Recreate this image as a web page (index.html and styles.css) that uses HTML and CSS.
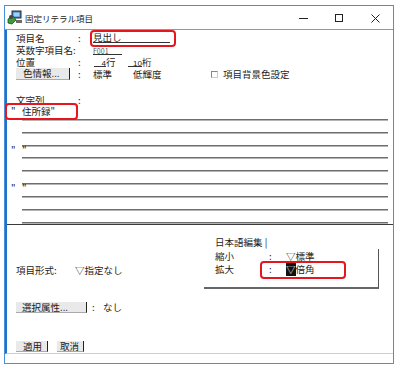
FILE: index.html
```html
<!DOCTYPE html>
<html lang="ja">
<head>
    <meta charset="UTF-8">
    <title>固定リテラル項目</title>
    <link rel="stylesheet" href="styles.css">
</head>
<body>
    <div class="window">
        <div class="titlebar">
            <svg class="app-icon" width="16" height="15" viewBox="0 0 16 15">
                <rect x="5" y="1" width="9" height="7" fill="#3d7fc4" stroke="#2b2b2b" stroke-width="1"/>
                <rect x="6.5" y="2.5" width="6" height="4" fill="#9fd0f5"/>
                <path d="M1 9 L6 6 L9 10 L5 14 L1 13 Z" fill="#3c9b3a" stroke="#1f4f1e" stroke-width="0.8"/>
                <circle cx="4" cy="7" r="2" fill="#444"/>
                <rect x="9" y="10" width="6" height="3" fill="#6b6b6b"/>
            </svg>
            <span class="title">固定リテラル項目</span>
            <div class="controls">
                <span class="ctl"><span class="ico-min"></span></span>
                <span class="ctl"><span class="ico-max"></span></span>
                <span class="ctl">
                    <svg width="9" height="9" viewBox="0 0 9 9"><path d="M0.5 0.5 L8.5 8.5 M8.5 0.5 L0.5 8.5" stroke="#222" stroke-width="1"/></svg>
                </span>
            </div>
        </div>

        <div class="client">
            <div class="head">
                <div class="row">
                    <span class="label">項目名</span><span class="colon">:</span>
                    <span class="field f-name">見出し</span>
                </div>
                <div class="row">
                    <span class="label">英数字項目名:</span><span class="colon"></span>
                    <span class="field f-id">F001</span>
                </div>
                <div class="row">
                    <span class="label">位置</span><span class="colon">:</span>
                    <span class="field f-num f-row">4</span><span class="unit">行</span>
                    <span class="field f-num f-col">10</span><span class="unit">桁</span>
                </div>
                <div class="row">
                    <span class="btn btn-color">色情報...</span><span class="colon">:</span>
                    <span class="val-std">標準</span>
                    <span class="val-low">低輝度</span>
                    <span class="check"></span>
                    <span>項目背景色設定</span>
                </div>
            </div>

            <div class="literal">
                <div class="row">
                    <span class="label">文字列</span><span class="colon">:</span>
                </div>
                <div class="lines">
                    <div class="line"><span class="q">"</span><span class="rule">住所録"</span></div>
                    <div class="line"><span class="q"></span><span class="rule"></span></div>
                    <div class="line"><span class="q"></span><span class="rule"></span></div>
                    <div class="line short"><span class="q">"</span><span class="rule">"</span></div>
                    <div class="line"><span class="q"></span><span class="rule"></span></div>
                    <div class="line"><span class="q"></span><span class="rule"></span></div>
                    <div class="line"><span class="q">"</span><span class="rule">"</span></div>
                    <div class="line"><span class="q"></span><span class="rule"></span></div>
                    <div class="line"><span class="q"></span><span class="rule"></span></div>
                </div>
            </div>

            <div class="edit">
                <div class="format">
                    <span class="fmt-label">項目形式:</span>
                    <span>▽指定なし</span>
                </div>
                <div class="jp">
                    <div class="jp-title">日本語編集 |</div>
                    <div class="jp-frame">
                        <div class="jp-row"><span>縮小</span><span>:</span><span>▽標準</span></div>
                        <div class="jp-row"><span>拡大</span><span>:</span><span><span class="inv">▽</span>倍角</span></div>
                    </div>
                </div>
            </div>

            <div class="row attr">
                <span class="btn btn-attr">選択属性...</span>
                <span class="attr-colon">:</span>
                <span>なし</span>
            </div>

            <div class="row actions">
                <span class="btn btn-ok">適用</span>
                <span class="btn btn-cancel">取消</span>
            </div>
        </div>
        <div class="footer"></div>
    </div>

    <div class="mark mark-name"></div>
    <div class="mark mark-text"></div>
    <div class="mark mark-wide"></div>
</body>
</html>
```

FILE: styles.css
```css
* { box-sizing: border-box; }
body { margin: 0; background: #fff; font-family: "Noto Sans CJK JP", "Noto Sans", sans-serif; font-size: 9.5px; color: #1c1c1c; }

/* ウィンドウ枠 */
.window { margin: 5px 0 0 4px; width: 390px; height: 359px; border: 1px solid #4a90d9; display: flex; flex-direction: column; }
.titlebar { height: 24px; flex: none; display: flex; align-items: center; border-bottom: 1px solid #a0958e; }
.app-icon { margin-left: 2px; }
.title { margin-left: 2px; font-size: 8.5px; color: #222; }
.controls { margin-left: auto; display: flex; height: 100%; }
.ctl { width: 36px; display: flex; align-items: center; justify-content: center; padding-top: 1px; }
.ico-min { width: 9px; height: 1px; background: #222; }
.ico-max { width: 8px; height: 8px; border: 1px solid #222; }

.client { height: 324px; flex: none; border-left: 2px solid #1f74c9; border-bottom: 1px solid #cfcfcf; padding-top: 2px; display: flex; flex-direction: column; }
.footer { flex: 1; }

/* 上部の項目 */
.row { display: flex; height: 12px; line-height: 12px; padding-left: 9px; white-space: nowrap; }
.label { width: 62px; }
.colon { width: 15px; }
.field { border-bottom: 1px solid #333; line-height: 10px; height: 11px; }
.f-name { width: 77px; }
.f-id { width: 29px; font-size: 7px; line-height: 14px; color: #555; }
.f-num { font-family: "Liberation Sans", sans-serif; font-size: 8px; line-height: 15px; text-align: right; }
.f-row { width: 12px; margin-left: 1px; }
.f-col { width: 14px; margin-left: 12px; }
.unit { width: 10px; }
.btn { background: #e9e9e9; border-right: 1px solid #222; border-bottom: 1px solid #aaa; line-height: 11px; }
.btn-color { width: 54px; padding-left: 7px; margin-right: 8px; }
.val-std { width: 40px; }
.val-low { width: 78px; }
.check { width: 7px; height: 7px; margin: 3px 5px 0 0; border: 1px solid #888; border-right-color: #ccc; border-bottom-color: #ccc; }

/* 文字列 */
.literal { border-bottom: 1px solid #3a3a3a; }
.literal .row { margin-top: 15px; height: 11px; line-height: 11px; }
.lines { margin-top: 1px; padding-bottom: 1px; }
.line { display: grid; grid-template-columns: 15px 1fr; height: 13px; margin-right: 5px; line-height: 9px; }
.line.short { height: 12px; }
.q { padding-left: 4px; }
.rule { border-bottom: 1px solid #6e6e6e; box-shadow: 0 1px 0 #b4b4b4; }

/* 下部 */
.edit { display: grid; grid-template-columns: 197px 175px; }
.format { padding: 40px 0 0 9px; line-height: 11px; display: flex; }
.fmt-label { width: 59px; }
.jp { padding-top: 12px; line-height: 11px; }
.jp-title { padding-left: 11px; height: 12px; }
.jp-frame { height: 40px; padding: 1px 0 0 11px; border-right: 1px solid #555; border-bottom: 2px solid #666; }
.jp-row { display: grid; grid-template-columns: 54px 17px 1fr; height: 13px; line-height: 13px; }
.inv { background: #111; color: #fff; }

.attr { margin-top: 13px; height: 11px; line-height: 11px; }
.btn-attr { width: 71px; padding-left: 6px; }
.attr-colon { width: 16px; padding-left: 5px; }
.actions { margin-top: 28px; height: 11px; line-height: 11px; }
.btn-ok { width: 32px; padding-left: 7px; margin-right: 9px; }
.btn-cancel { width: 27px; padding-left: 3px; }

/* 赤枠 */
.mark { position: absolute; border: 2px solid #e5161d; border-radius: 4px; }
.mark-name { left: 90px; top: 30px; width: 86px; height: 17px; }
.mark-text { left: 5px; top: 103px; width: 73px; height: 17px; }
.mark-wide { left: 260px; top: 261px; width: 86px; height: 18px; }
```
